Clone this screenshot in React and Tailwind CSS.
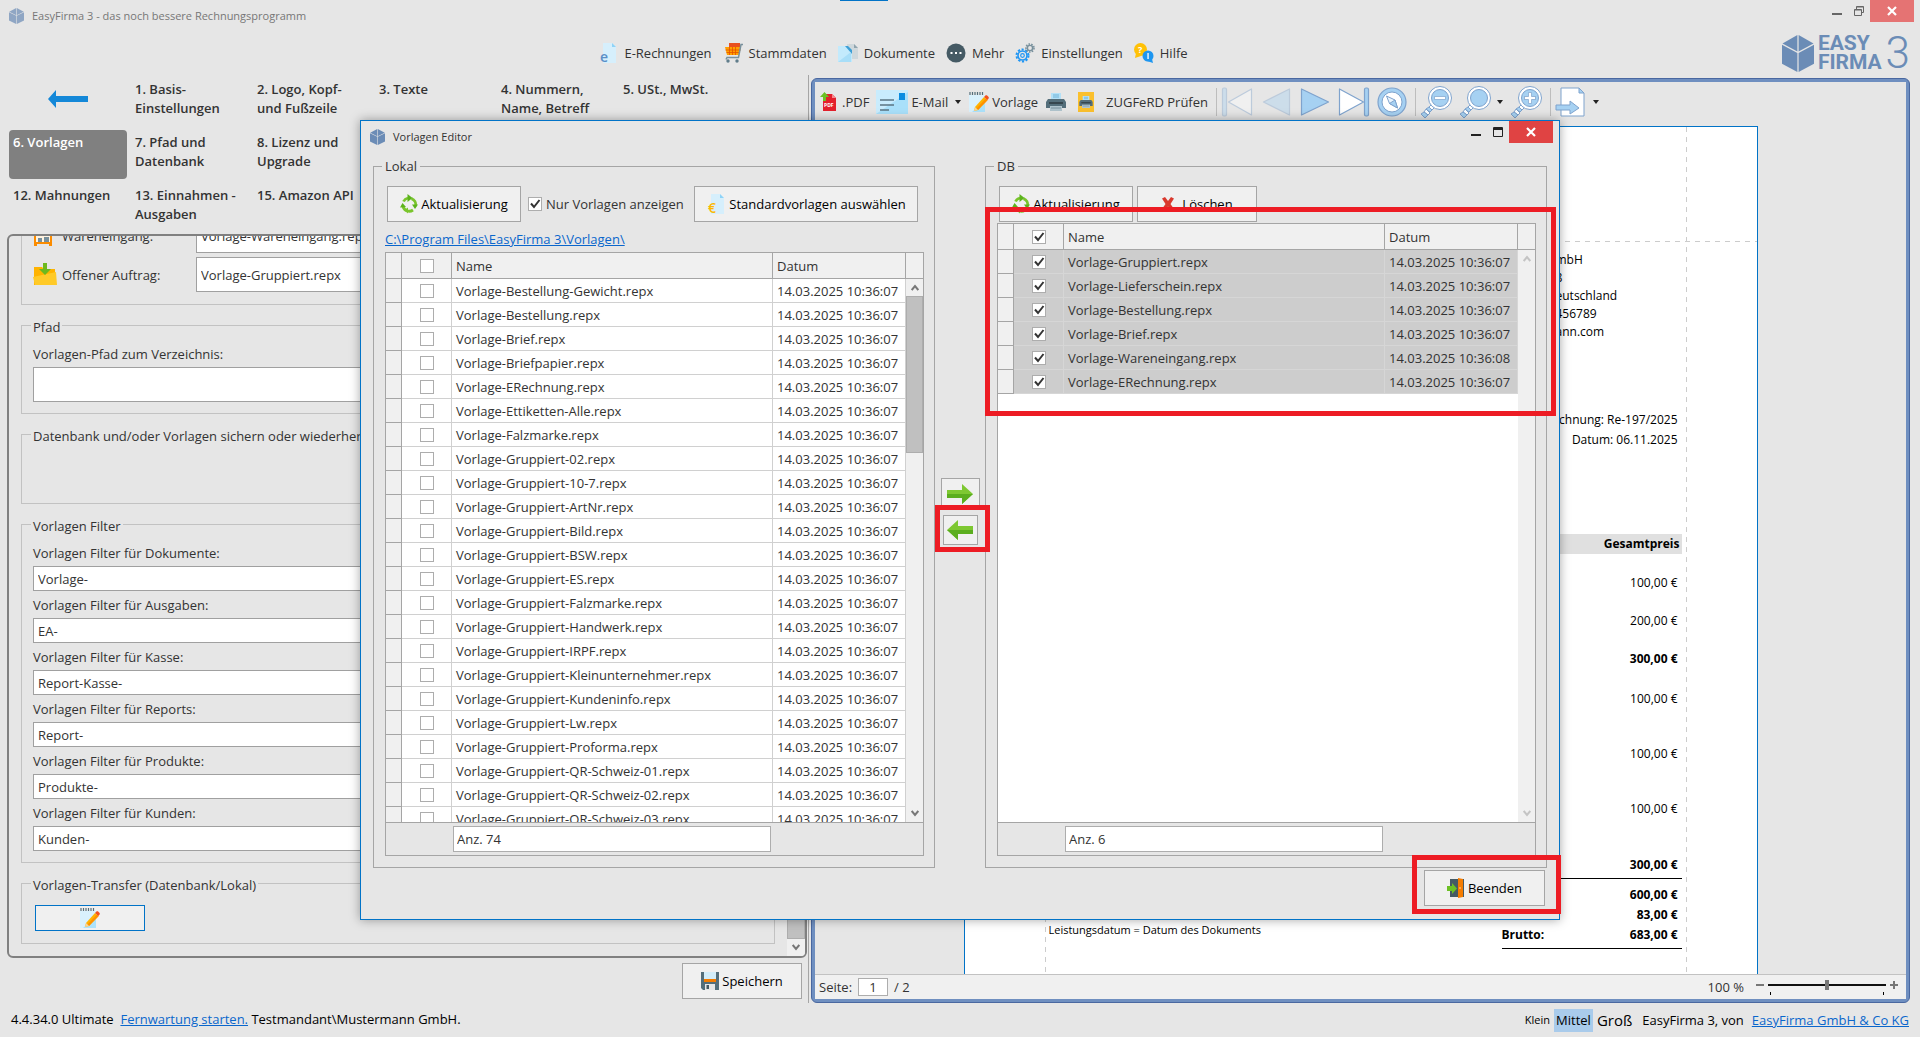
import { useId, useState } from 'react';

const TILES = [
  null,
  '1. Basis-\nEinstellungen',
  '2. Logo, Kopf-\nund Fußzeile',
  '3. Texte',
  '4. Nummern,\nName, Betreff',
  '5. USt., MwSt.',
  '6. Vorlagen',
  '7. Pfad und\nDatenbank',
  '8. Lizenz und\nUpgrade',
  '',
  '',
  '',
  '12. Mahnungen',
  '13. Einnahmen -\nAusgaben',
  '15. Amazon API',
];

const FILTERS = [
  ['Dokumente', 'Vorlage-'],
  ['Ausgaben', 'EA-'],
  ['Kasse', 'Report-Kasse-'],
  ['Reports', 'Report-'],
  ['Produkte', 'Produkte-'],
  ['Kunden', 'Kunden-'],
];

const LOCAL_FILES = [
  'Bestellung-Gewicht',
  'Bestellung',
  'Brief',
  'Briefpapier',
  'ERechnung',
  'Ettiketten-Alle',
  'Falzmarke',
  'Gruppiert-02',
  'Gruppiert-10-7',
  'Gruppiert-ArtNr',
  'Gruppiert-Bild',
  'Gruppiert-BSW',
  'Gruppiert-ES',
  'Gruppiert-Falzmarke',
  'Gruppiert-Handwerk',
  'Gruppiert-IRPF',
  'Gruppiert-Kleinunternehmer',
  'Gruppiert-Kundeninfo',
  'Gruppiert-Lw',
  'Gruppiert-Proforma',
  'Gruppiert-QR-Schweiz-01',
  'Gruppiert-QR-Schweiz-02',
  'Gruppiert-QR-Schweiz-03',
].map((n) => ({ name: `Vorlage-${n}.repx`, date: '14.03.2025 10:36:07' }));

const DB_FILES = [
  { name: 'Vorlage-Gruppiert.repx', date: '14.03.2025 10:36:07' },
  { name: 'Vorlage-Lieferschein.repx', date: '14.03.2025 10:36:07' },
  { name: 'Vorlage-Bestellung.repx', date: '14.03.2025 10:36:07' },
  { name: 'Vorlage-Brief.repx', date: '14.03.2025 10:36:07' },
  { name: 'Vorlage-Wareneingang.repx', date: '14.03.2025 10:36:08' },
  { name: 'Vorlage-ERechnung.repx', date: '14.03.2025 10:36:07' },
];

/* ---------- icons ---------- */

function CubeIcon({ className }) {
  return (
    <svg viewBox="0 0 32 38" className={className} preserveAspectRatio="none" aria-hidden="true">
      <path d="M0 10L15.400 18.500V38L0 29.500z" fill="#6b8cb6" />
      <path d="M32 10L16.600 18.500V38L32 29.500z" fill="#6b8cb6" />
      <path d="M15.400 0L.5 8.700L15.400 17z" fill="#6b8cb6" />
      <path d="M16.600 0L31.500 8.700L16.600 17z" fill="#6b8cb6" />
    </svg>
  );
}

function PageIcon({ glyph, color }) {
  return (
    <svg viewBox="0 0 20 22" className="h-[22px] w-5" aria-hidden="true">
      <path d="M5 1h9l4 4v16H5z" fill="#d6effc" />
      <path d="M14 1l4 4h-4z" fill="#8fd3f7" />
      <text x="2" y="20" fontSize="14" fontWeight="600" fill={color} fontFamily="Open Sans">{glyph}</text>
    </svg>
  );
}

function CartIcon() {
  return (
    <svg viewBox="0 0 20 20" className="size-5" aria-hidden="true">
      <path d="M6 0h11v5H6z" fill="#e8501f" />
      <path d="M2 4h16l-2 8H4z" fill="#ffa000" />
      <path d="M6.500 4v8M9.500 4v8M12.500 4v8M2.500 7h15M3.500 9.500h13" stroke="#e65100" strokeWidth=".8" />
      <path d="M20 1.500h-2l-2.500 13H4l-1 2" fill="none" stroke="#78909c" strokeWidth="1.500" />
      <circle cx="5" cy="18" r="1.700" fill="#607d8b" />
      <circle cx="14" cy="18" r="1.700" fill="#607d8b" />
    </svg>
  );
}

function DocsIcon() {
  return (
    <svg viewBox="0 0 20 20" className="size-5" aria-hidden="true">
      <path d="M9 1h7l4 4v11H9z" fill="#cfd8dc" />
      <path d="M16 1l4 4h-4z" fill="#90a4ae" />
      <path d="M0 3h9l5 5v11H0z" fill="#c3eafc" />
      <path d="M7 3l7 8V7L10 3z" fill="#3d9fd6" />
      <path d="M0 19L13 9v10z" fill="#a8def8" />
    </svg>
  );
}

function MoreIcon() {
  return (
    <svg viewBox="0 0 20 20" className="size-5" aria-hidden="true">
      <circle cx="10" cy="10" r="9.500" fill="#455a64" />
      <path d="M4.500 9h2v2h-2zM9 9h2v2H9zM13.500 9h2v2h-2z" fill="#fff" />
    </svg>
  );
}

function GearsIcon() {
  return (
    <svg viewBox="0 0 20 20" className="size-5" fill="none" aria-hidden="true">
      <circle cx="7.500" cy="12.500" r="6" stroke="#2196f3" strokeWidth="2" strokeDasharray="2.200 1.600" />
      <circle cx="7.500" cy="12.500" r="4.500" stroke="#2196f3" strokeWidth="1.600" />
      <circle cx="7.500" cy="12.500" r="1.800" stroke="#2196f3" strokeWidth="1.200" />
      <circle cx="15" cy="5" r="4" stroke="#78909c" strokeWidth="1.600" strokeDasharray="1.600 1.200" />
      <circle cx="15" cy="5" r="2.600" stroke="#78909c" strokeWidth="1.400" />
    </svg>
  );
}

function HelpIcon() {
  return (
    <svg viewBox="0 0 20 20" className="size-5" aria-hidden="true">
      <circle cx="6.500" cy="6.500" r="6.500" fill="#ffc107" />
      <path d="M2 10l-1 5 6-2z" fill="#ffc107" />
      <circle cx="14" cy="13" r="5.500" fill="#1e96f0" />
      <path d="M18 16l1 4-6-2z" fill="#1e96f0" />
      <text x="4" y="10" fontSize="9" fontWeight="700" fill="#fff" fontFamily="Open Sans">?</text>
      <path d="M13.400 10h1.300v6h-1.300z" fill="#fff" />
    </svg>
  );
}

function PdfIcon() {
  return (
    <svg viewBox="0 0 18 20" className="h-5 w-[18px]" aria-hidden="true">
      <path d="M3 2h9l4 4v13H3z" fill="#e4202c" />
      <path d="M12 2l4 4h-4z" fill="#f58a8f" />
      <path d="M4.500 0L0 5h3v4h3V5h3z" fill="#6cc024" />
      <text x="4" y="15" fontSize="5" fontWeight="700" fill="#fff" fontFamily="Open Sans">PDF</text>
    </svg>
  );
}

function MailIcon() {
  return (
    <svg viewBox="0 0 32 24" className="h-6 w-8" aria-hidden="true">
      <path d="M0 0h32v24H0z" fill="#c9ecfd" />
      <path d="M32 2v22H0z" fill="#a9e0fa" />
      <path d="M23 3h6v7h-6z" fill="#0a8ce0" />
      <path d="M4 10h14M4 15h14M4 20h9" stroke="#5b7482" strokeWidth="1.300" />
    </svg>
  );
}

function NotePencilIcon() {
  return (
    <svg viewBox="0 0 20 20" className="size-5" aria-hidden="true">
      <path d="M0 3h16v17H0z" fill="#d9f1fd" />
      <path d="M16 8v12H3z" fill="#ace2fb" />
      <path d="M1 0v3M3.500 0v3M6 0v3M8.500 0v3M11 0v3M13.500 0v3" stroke="#546e7a" strokeWidth="1.200" />
      <path d="M5 19l1-4L15 5l3.500 3.200L9 18z" fill="#ffb300" />
      <path d="M7.500 16.500L16.800 6.600l1.700 1.600L9 18z" fill="#ff9100" />
      <path d="M15 5l1.200-1.200c.6-.6 1.500-.6 2.200 0l1 1c.6.6.6 1.400 0 2l-1 1.300z" fill="#f4511e" />
      <path d="M6 15l3 3-4 1z" fill="#f5d5a0" />
    </svg>
  );
}

function PrinterIcon({ className }) {
  return (
    <svg viewBox="0 0 20 18" className={className} aria-hidden="true">
      <path d="M5 0h10v7H5z" fill="#b3e0f7" />
      <path d="M7 2h6M7 4h6" stroke="#5fa8cf" strokeWidth=".8" />
      <path d="M2 6h16l2 3v6H0V9z" fill="#546e7a" />
      <path d="M3 9h14v2H3z" fill="#37474f" />
      <path d="M4 13h12v5H4z" fill="#b0c4cd" />
      <path d="M5 15h10" stroke="#78909c" strokeWidth="1" />
    </svg>
  );
}

function RecycleIcon() {
  return (
    <svg viewBox="0 0 18 20" className="h-5 w-[18px]" fill="none" aria-hidden="true">
      <path d="M3.500 7.500A6.500 6.500 0 0 1 8 4" stroke="#7ac52c" strokeWidth="2.800" />
      <path d="M11.500 4.600A6.500 6.500 0 0 1 15.600 12" stroke="#7ac52c" strokeWidth="2.800" />
      <path d="M13 16A6.500 6.500 0 0 1 3 12.500" stroke="#7ac52c" strokeWidth="2.800" />
      <path d="M7.500 0l5 4-5 4zM12 10.500h6l-3 4.500zM0 13.500l2.500-4.500 3.500 4z" fill="#5cb31c" />
      <path d="M8 13.500v6l-3.500-3.500z" fill="#7ac52c" />
    </svg>
  );
}

function CrossIcon() {
  return (
    <svg viewBox="0 0 14 14" className="size-3.5" aria-hidden="true">
      <path d="M1 1.500L4 0l3 4 3-4 3 1.500L9.500 7l3.500 5-3 2-3-4.500L4 14l-3-2 3.500-5z" fill="#d9392e" />
    </svg>
  );
}

function ArrowIcon({ left }) {
  return (
    <svg viewBox="0 0 26 20" className={left ? 'h-5 w-[26px] rotate-180' : 'h-5 w-[26px]'} aria-hidden="true">
      <path d="M0 6h15V0l11 10-11 10v-6H0z" fill="#7ec832" />
      <path d={left ? 'M0 6h15V0l11 10H0z' : 'M0 10h26L15 20v-6H0z'} fill="#5bae1e" />
    </svg>
  );
}

function DoorIcon() {
  return (
    <svg viewBox="0 0 18 20" className="h-5 w-[18px]" aria-hidden="true">
      <path d="M3 1h14v18H3z" fill="#455a64" />
      <path d="M11 0l5 1v18l-5 1z" fill="#f57c00" />
      <circle cx="13" cy="10" r=".8" fill="#ffe0b2" />
      <path d="M0 8h5V5l5 5.500L5 16v-3H0z" fill="#6cc024" />
    </svg>
  );
}

function FloppyIcon() {
  return (
    <svg viewBox="0 0 18 18" className="size-[18px]" aria-hidden="true">
      <path d="M0 0h18v18H2l-2-2z" fill="#546e7a" />
      <path d="M3 0h12v7H3z" fill="#d3edf9" />
      <path d="M3 7h12v3H3z" fill="#f57c00" />
      <path d="M4 12h10v6H4z" fill="#e6e6e6" />
      <path d="M5.500 13h2.500v4H5.500z" fill="#455a64" />
    </svg>
  );
}

function ShelfIcon() {
  return (
    <svg viewBox="0 0 20 20" className="size-5" aria-hidden="true">
      <path d="M1 0h18v20h-3v-2H4v2H1z" fill="#fb8c00" />
      <path d="M3 2h14v5H3zM3 10h14v6H3z" fill="#fff3e0" />
      <path d="M5 3h5v4H5z" fill="#e64a19" />
      <path d="M5 12h4v4H5zM11 11h5v5h-5z" fill="#78909c" />
    </svg>
  );
}

function FolderIcon() {
  return (
    <svg viewBox="0 0 24 24" className="size-6" aria-hidden="true">
      <path d="M1 4h8l2 2h11v16H1z" fill="#ffb300" />
      <path d="M0 14L23 9l1 13H2z" fill="#ffca28" />
      <path d="M10 0h4v6h4l-6 6-6-6h4z" fill="#6cb91e" />
    </svg>
  );
}

function NavIcon({ kind, dim }) {
  const shapes = {
    first: (
      <>
        <rect x="1" y="1" width="4" height="28" rx="1.500" fill="#a6d1f2" />
        <path d="M30 2v26L7 15z" fill="#fff" />
      </>
    ),
    prev: <path d="M29 2v26L3 15z" fill="#a6d1f2" />,
    next: <path d="M2 2v26l27-13z" fill="#a6d1f2" />,
    last: (
      <>
        <path d="M1 2v26l24-13z" fill="#fff" />
        <rect x="26" y="1" width="4" height="28" rx="1.500" fill="#a6d1f2" />
      </>
    ),
  };
  return (
    <svg
      viewBox="0 0 31 30"
      className={dim ? 'h-[30px] w-8 opacity-40' : 'h-[30px] w-8'}
      stroke="#7fa3cd"
      strokeWidth="1.200"
      strokeLinejoin="round"
      aria-hidden="true"
    >
      {shapes[kind]}
    </svg>
  );
}

function CompassIcon() {
  return (
    <svg viewBox="0 0 30 30" className="size-[30px]" stroke="#7fa3cd" aria-hidden="true">
      <circle cx="15" cy="15" r="14" fill="#a6d1f2" strokeWidth="1.200" />
      <circle cx="15" cy="15" r="10" fill="#fff" />
      <path d="M9.500 9l8.500 4 2.500 8-8-4.500z" fill="#e8f3fc" />
      <path d="M12.500 16.500L18 13l2.500 8z" fill="#a6d1f2" />
    </svg>
  );
}

function ZoomIcon({ sign }) {
  return (
    <svg viewBox="0 0 32 32" className="size-8" stroke="#7fa3cd" aria-hidden="true">
      <path d="M13 17l3 3-4 4-3-3z" fill="#fff" />
      <path d="M9 21l3 3-2 2-4-3z" fill="#a6d1f2" />
      <path d="M6 23l4 4-2 2-4-3z" fill="#fff" />
      <path d="M4 26l4 3-3 3-4-4z" fill="#a6d1f2" />
      <circle cx="20" cy="12" r="11.500" fill="#fff" />
      <circle cx="20" cy="12" r="8.500" fill="#a6d1f2" />
      {sign && <path d="M14.500 10.500h11v3h-11z" fill="#fff" strokeWidth=".7" />}
      {sign === '+' && (
        <path d="M18.500 6.500h3v4h4v3h-4v4h-3v-4h-4v-3h4z" fill="#fff" strokeWidth=".7" />
      )}
    </svg>
  );
}

function ExportIcon() {
  return (
    <svg viewBox="0 0 30 30" className="size-[30px]" stroke="#7fa3cd" strokeLinejoin="round" aria-hidden="true">
      <path d="M6 1h18l5 5v23H6z" fill="#fff" />
      <path d="M24 1v5h5z" fill="#a6d1f2" />
      <path d="M1 18h14v-4l9 7-9 6v-4H1z" fill="#a6d1f2" />
    </svg>
  );
}

function Caret() {
  return (
    <svg viewBox="0 0 6 4" className="h-1 w-1.5" aria-hidden="true">
      <path d="M0 0h6L3 4z" fill="#222" />
    </svg>
  );
}

function Chevron({ down, muted }) {
  return (
    <svg viewBox="0 0 8 7" className="h-[7px] w-2" fill="none" stroke={muted ? '#c4c4c4' : '#777'} strokeWidth="2" aria-hidden="true">
      <path d={down ? 'M.7 1L4 5L7.300 1' : 'M.7 6L4 2L7.300 6'} />
    </svg>
  );
}

/* ---------- small controls ---------- */

function Check({ defaultChecked = false, id, label }) {
  return (
    <span className="relative inline-block size-3.5 align-middle">
      <input
        id={id}
        type="checkbox"
        aria-label={label}
        defaultChecked={defaultChecked}
        className="peer block size-3.5 appearance-none border border-[#adadad] bg-white"
      />
      <svg
        viewBox="0 0 14 14"
        className="pointer-events-none absolute inset-0 hidden size-3.5 peer-checked:block"
        fill="none"
        stroke="#333"
        strokeWidth="2"
        aria-hidden="true"
      >
        <path d="M3 6.500L6 10L11.500 3" />
      </svg>
    </span>
  );
}

function WindowButtons({ restore, faded }) {
  return (
    <div className={faded ? 'flex items-start text-[#666]' : 'flex items-start text-[#222]'}>
      <button type="button" aria-label="Minimieren" className="flex h-[22px] w-[22px] items-center justify-center">
        <svg viewBox="0 0 10 10" className="size-2.5"><path d="M0 7h10v2H0z" fill="currentColor" /></svg>
      </button>
      <button type="button" aria-label="Maximieren" className="flex h-[22px] w-[22px] items-center justify-center">
        <svg viewBox="0 0 10 10" className="size-2.5" fill="none" stroke="currentColor">
          {restore ? (
            <path d="M2.500 3V.5h7v6H7.500M.5 3.500h7v6h-7zM.5 4h7M2.500 1h7" />
          ) : (
            <path d="M.5 .5h9v9h-9zM0 1.500h10M0 2.500h10" />
          )}
        </svg>
      </button>
      <button
        type="button"
        aria-label="Schließen"
        className={
          faded
            ? 'flex h-[22px] w-11 items-center justify-center bg-[#e57373]'
            : 'flex h-[22px] w-11 items-center justify-center bg-[#e04343]'
        }
      >
        <svg viewBox="0 0 10 10" className="size-2.5" stroke="#fff" strokeWidth="2.200">
          <path d="M1 1l8 8M9 1l-8 8" />
        </svg>
      </button>
    </div>
  );
}

function Button({ icon, children, className }) {
  return (
    <button
      type="button"
      className={`flex h-9 items-center justify-center gap-[3px] border border-[#a5a5a5] bg-[#f0f0f0] whitespace-nowrap text-black ${className}`}
    >
      {icon}
      {children}
    </button>
  );
}

function SettingsGroup({ title, children, className = '' }) {
  return (
    <fieldset className={`shrink-0 border border-[#c2c2c2] px-[11px] ${className}`}>
      {title && <legend className="-ml-0.5 px-0.5 pt-1 leading-5 whitespace-nowrap">{title}</legend>}
      {children}
    </fieldset>
  );
}

function LabeledInput({ label, value, tall }) {
  const id = useId();
  return (
    <div>
      <label htmlFor={id} className="block h-[27px] leading-7">{label}</label>
      <input
        id={id}
        defaultValue={value}
        className={
          tall
            ? 'block h-[35px] w-full border border-[#a0a0a0] bg-white px-1'
            : 'block h-[25px] w-full border border-[#a0a0a0] bg-white px-1'
        }
      />
    </div>
  );
}

function TemplateRow({ icon, label, value }) {
  const id = useId();
  return (
    <div className="mb-1 flex h-[35px] items-center">
      <span className="flex w-[29px] shrink-0 items-center">{icon}</span>
      <label htmlFor={id} className="w-[134px] shrink-0">{label}</label>
      <input id={id} defaultValue={value} className="h-full min-w-0 flex-1 border border-[#a0a0a0] bg-white px-1" />
    </div>
  );
}

/* ---------- settings on the left ---------- */

function TileMenu() {
  return (
    <nav className="grid grid-cols-[repeat(6,118px)] grid-rows-[repeat(3,49px)] gap-1 pt-0.5 pl-0.5 leading-[19px] font-semibold">
      {TILES.map((tile, i) => {
        if (tile === null) {
          return (
            <button key={i} type="button" aria-label="Zurück" className="flex items-center justify-center pb-1.5">
              <svg viewBox="0 0 40 18" className="h-[18px] w-10" aria-hidden="true">
                <path d="M8 0v6h32v6H8v6L0 9z" fill="#1488d8" />
              </svg>
            </button>
          );
        }
        if (!tile) return <span key={i} />;
        return (
          <button
            key={i}
            type="button"
            className={
              tile === '6. Vorlagen'
                ? 'flex rounded bg-[#808080] px-1 pt-[3px] text-left whitespace-pre text-white'
                : 'flex px-1 pt-[3px] text-left whitespace-pre'
            }
          >
            {tile}
          </button>
        );
      })}
    </nav>
  );
}

function SettingsPanel() {
  return (
    <div className="mt-0.5 flex min-h-0 flex-1 overflow-hidden rounded-md border-2 border-[#808080]">
      {/* scrolled to the end, so the content hangs from the bottom edge */}
      <div className="flex min-w-0 flex-1 flex-col justify-end gap-2 overflow-hidden px-3 pb-3">
        <SettingsGroup className="pb-2">
          <TemplateRow icon={<ShelfIcon />} label="Wareneingang:" value="Vorlage-Wareneingang.repx" />
          <TemplateRow icon={<FolderIcon />} label="Offener Auftrag:" value="Vorlage-Gruppiert.repx" />
        </SettingsGroup>
        <SettingsGroup title="Pfad" className="pb-[11px]">
          <div className="pt-[3px]">
            <LabeledInput label="Vorlagen-Pfad zum Verzeichnis:" value="" tall />
          </div>
        </SettingsGroup>
        <SettingsGroup title="Datenbank und/oder Vorlagen sichern oder wiederherstellen">
          <div className="h-[57px]" />
        </SettingsGroup>
        <SettingsGroup title="Vorlagen Filter" className="pb-[11px]">
          <div className="pt-[3px]">
            {FILTERS.map(([name, value]) => (
              <LabeledInput key={name} label={`Vorlagen Filter für ${name}:`} value={value} />
            ))}
          </div>
        </SettingsGroup>
        <SettingsGroup title="Vorlagen-Transfer (Datenbank/Lokal)" className="pb-3">
          <button
            type="button"
            aria-label="Vorlagen-Transfer öffnen"
            className="mt-2.5 ml-0.5 flex h-[26px] w-[110px] items-center justify-center border border-[#0173c7] bg-[#f0f0f0]"
          >
            <NotePencilIcon />
          </button>
        </SettingsGroup>
      </div>
      <div className="flex w-[18px] flex-col bg-[#f0f0f0]">
        <div className="mt-10 flex-1 border border-[#adadad] bg-[#c0c0c0]" />
        <div className="flex h-[17px] items-center justify-center"><Chevron down /></div>
      </div>
    </div>
  );
}

/* ---------- invoice preview on the right ---------- */

function Divider() {
  return <span className="h-7 w-px bg-[#bdbdbd]" />;
}

function ToolButton({ label, children, className = '' }) {
  return (
    <button type="button" aria-label={label} className={`flex shrink-0 items-center whitespace-nowrap ${className}`}>
      {children}
    </button>
  );
}

function PreviewToolbar() {
  return (
    <div className="flex h-[41px] shrink-0 items-center pb-0.5 pl-[5px]">
      <ToolButton className="gap-1"><PdfIcon />.PDF</ToolButton>
      <ToolButton className="ml-[7px] gap-[3px]"><MailIcon />E-Mail<span className="ml-1"><Caret /></span></ToolButton>
      <ToolButton className="ml-2 gap-[3px]"><NotePencilIcon />Vorlage</ToolButton>
      <ToolButton label="Drucken" className="ml-2"><PrinterIcon className="h-[18px] w-5" /></ToolButton>
      <ToolButton className="ml-3 gap-3">
        <span className="flex h-5 w-4 items-center justify-center bg-[#fbc02d]"><PrinterIcon className="h-3 w-3.5" /></span>
        ZUGFeRD Prüfen
      </ToolButton>
      <div className="ml-2 flex items-center gap-2">
        <Divider />
        <div className="-ml-1 flex gap-[7px]">
          <ToolButton label="Erste Seite"><NavIcon kind="first" dim /></ToolButton>
          <ToolButton label="Vorige Seite"><NavIcon kind="prev" dim /></ToolButton>
          <ToolButton label="Nächste Seite"><NavIcon kind="next" /></ToolButton>
          <ToolButton label="Letzte Seite"><NavIcon kind="last" /></ToolButton>
          <ToolButton label="Navigation"><CompassIcon /></ToolButton>
        </div>
        <Divider />
        <div className="-ml-1 flex gap-[7px]">
          <ToolButton label="Verkleinern"><ZoomIcon sign="-" /></ToolButton>
          <ToolButton label="Zoom" className="gap-1.5"><ZoomIcon /><Caret /></ToolButton>
          <ToolButton label="Vergrößern"><ZoomIcon sign="+" /></ToolButton>
        </div>
        <Divider />
        <ToolButton label="Exportieren" className="-ml-1 gap-2"><ExportIcon /><Caret /></ToolButton>
      </div>
    </div>
  );
}

function InvoicePage() {
  return (
    <div className="relative mt-[3px] flex w-[794px] flex-col overflow-hidden border border-b-0 border-[#0173c7] bg-white pr-[75px] pl-[84px] text-xs text-black">
      <span className="absolute inset-y-0 left-20 w-px bg-[repeating-linear-gradient(to_bottom,#ccc_0_5px,transparent_5px_10px)]" />
      <span className="absolute inset-y-0 right-[70px] w-px bg-[repeating-linear-gradient(to_bottom,#ccc_0_5px,transparent_5px_10px)]" />
      <span className="absolute inset-x-0 top-[114px] h-px bg-[repeating-linear-gradient(to_right,#ccc_0_5px,transparent_5px_10px)]" />

      <address className="mt-[124px] w-[126px] self-end leading-[18px] not-italic">
        mbH
        <br />8
        <br />eutschland
        <br />456789
        <br />ann.com
      </address>
      <div className="mt-[69px] pr-1 text-right leading-5">
        <p>Rechnung: Re-197/2025</p>
        <p>Datum: 06.11.2025</p>
      </div>

      <table className="mt-[84px] w-full border-b border-black text-right leading-[18px]">
        <thead>
          <tr className="h-5 bg-[#e0e0e0]">
            <th scope="col" className="p-0 pr-0.5 font-bold">Gesamtpreis</th>
          </tr>
        </thead>
        <tbody className="align-bottom">
          <tr className="h-[38px]"><td className="p-0 pr-1">100,00 €</td></tr>
          <tr className="h-[38px]"><td className="p-0 pr-1">200,00 €</td></tr>
          <tr className="h-[38px] font-bold"><td className="p-0 pr-1">300,00 €</td></tr>
          <tr className="h-10"><td className="p-0 pr-1">100,00 €</td></tr>
          <tr className="h-[55px]"><td className="p-0 pr-1">100,00 €</td></tr>
          <tr className="h-[55px]"><td className="p-0 pr-1">100,00 €</td></tr>
          <tr className="h-[60px] font-bold"><td className="p-0 pr-1 pb-1">300,00 €</td></tr>
        </tbody>
      </table>

      <div className="mt-1.5 flex items-end justify-between">
        <p className="pb-[11px] text-[11px]">Leistungsdatum = Datum des Dokuments</p>
        <dl className="grid w-[180px] grid-cols-2 border-b border-black pr-1 pb-[3px] leading-5 font-bold">
          <dd className="col-start-2 text-right">600,00 €</dd>
          <dd className="col-start-2 text-right">83,00 €</dd>
          <dt>Brutto:</dt>
          <dd className="text-right">683,00 €</dd>
        </dl>
      </div>
    </div>
  );
}

function PreviewStatus() {
  return (
    <div className="flex h-[25px] shrink-0 items-center border-t border-[#c2c2c2] bg-[#f0f0f0] pr-2 pl-1">
      <label htmlFor="page">Seite:</label>
      <input id="page" defaultValue="1" className="mx-1.5 h-[18px] w-[30px] border border-[#adadad] bg-white text-center" />
      <span>/ 2</span>
      <label htmlFor="zoom" className="ml-auto">100 %</label>
      <button type="button" aria-label="Kleiner" className="ml-3 self-start pt-[9px]">
        <span className="block h-0.5 w-2 bg-[#777]" />
      </button>
      <div className="mx-1 w-[118px] self-start pt-[5px]">
        <input
          id="zoom"
          type="range"
          min="0"
          max="100"
          defaultValue="50"
          className="block h-2.5 w-full appearance-none bg-transparent bg-[linear-gradient(#111,#111)] bg-[length:100%_2px] bg-center bg-no-repeat [&::-webkit-slider-thumb]:h-2.5 [&::-webkit-slider-thumb]:w-1 [&::-webkit-slider-thumb]:appearance-none [&::-webkit-slider-thumb]:bg-[#777]"
        />
        <div className="mt-0.5 flex justify-between px-0.5">
          <span className="h-[3px] w-px bg-black" />
          <span className="h-[3px] w-px bg-black" />
        </div>
      </div>
      <button type="button" aria-label="Größer" className="self-start pt-1.5">
        <svg viewBox="0 0 8 8" className="size-2"><path d="M3 0h2v8H3zM0 3h8v2H0z" fill="#777" /></svg>
      </button>
    </div>
  );
}

/* ---------- template editor dialog ---------- */

function EditorGroup({ title, children }) {
  return (
    <fieldset className="flex min-w-0 flex-1 flex-col border border-[#a5a5a5] pr-2.5 pb-[11px] pl-[11px]">
      <legend className="-ml-[3px] px-[3px] leading-5">{title}</legend>
      {children}
    </fieldset>
  );
}

function FileGrid({ files, count, checked = false }) {
  const cell = checked ? 'border-r border-b border-[#d6d6d6] p-0 pl-1' : 'border-r border-b border-[#d0d0d0] p-0 pl-1';
  const head = 'border-r border-b border-[#a5a5a5] p-0 pl-1 text-left font-normal';
  return (
    <div className="flex min-h-0 flex-1 flex-col border border-[#a5a5a5]">
      <div className="flex min-h-0 flex-1 overflow-hidden bg-white">
        <div className="min-w-0 flex-1">
          <table className="w-full table-fixed border-separate border-spacing-0">
            <colgroup>
              <col className="w-4" />
              <col className="w-[50px]" />
              <col />
              <col className="w-[133px]" />
            </colgroup>
            <thead>
              <tr className="h-[26px] bg-[#f0f0f0]">
                <th className={head} />
                <th className="border-r border-b border-[#a5a5a5] p-0 text-center leading-none">
                  <Check defaultChecked={checked} label="Alle auswählen" />
                </th>
                <th scope="col" className={head}>Name</th>
                <th scope="col" className={head}>Datum</th>
              </tr>
            </thead>
            <tbody>
              {files.map((file) => (
                <tr key={file.name} className={checked ? 'h-6 bg-[#cdcdcd]' : 'h-6'}>
                  <td className="border-r border-b border-[#a5a5a5] bg-[#f0f0f0] p-0" />
                  <td className={checked ? 'border-r border-b border-[#d6d6d6] p-0 text-center leading-none' : 'border-r border-b border-[#d0d0d0] p-0 text-center leading-none'}>
                    <Check defaultChecked={checked} label={file.name} />
                  </td>
                  <td className={cell}>{file.name}</td>
                  <td className={cell}>{file.date}</td>
                </tr>
              ))}
            </tbody>
          </table>
        </div>
        <div className="flex w-[17px] flex-col bg-[#f0f0f0]">
          <div className="h-[26px] border-b border-[#a5a5a5]" />
          <div className="flex h-[17px] items-center justify-center"><Chevron muted={checked} /></div>
          {!checked && <div className="h-[157px] border border-[#adadad] bg-[#c0c0c0]" />}
          <div className="mt-auto flex h-[17px] items-center justify-center"><Chevron down muted={checked} /></div>
        </div>
      </div>
      <div className="h-[33px] border-t border-[#a5a5a5] bg-[#e6e6e6] pt-[3px] pr-[152px] pl-[67px]">
        <input aria-label="Anzahl" readOnly value={count} className="block h-[26px] w-full border border-[#adadad] bg-white px-[3px]" />
      </div>
    </div>
  );
}

// red frame drawn around the steps the user has to click
function Marker({ className }) {
  return <span className={`pointer-events-none absolute border-[5px] border-[#ed1c24] ${className}`} />;
}

function TemplateEditor() {
  return (
    <section
      role="dialog"
      aria-label="Vorlagen Editor"
      className="absolute top-[120px] right-[360px] left-[360px] flex h-[800px] flex-col border border-[#0173c7] bg-[#e6e6e6] shadow-[0_0_10px_rgba(0,0,0,0.35)]"
    >
      <header className="flex h-8 shrink-0 justify-between pr-1.5 pl-[9px]">
        <div className="flex items-center gap-2 text-[11px]">
          <CubeIcon className="h-4 w-[15px]" />
          Vorlagen Editor
        </div>
        <WindowButtons />
      </header>

      <div className="mt-[3px] flex h-[712px] px-3">
        <EditorGroup title="Lokal">
          <div className="flex items-center px-0.5 pt-2.5">
            <Button icon={<RecycleIcon />} className="w-[134px]">Aktualisierung</Button>
            <label className="ml-[7px] flex items-center gap-1 whitespace-nowrap">
              <Check defaultChecked />
              Nur Vorlagen anzeigen
            </label>
            <Button icon={<PageIcon glyph="€" color="#fbb800" />} className="mr-1 ml-auto w-56">Standardvorlagen auswählen</Button>
          </div>
          <div className="flex h-[30px] items-center pt-1">
            <a href="#vorlagen" className="text-[#0a66cc] underline">C:\Program Files\EasyFirma 3\Vorlagen\</a>
          </div>
          <FileGrid files={LOCAL_FILES} count="Anz. 74" />
        </EditorGroup>

        <div className="flex w-[50px] flex-col items-center pt-[322px]">
          <button type="button" aria-label="In die Datenbank kopieren" className="flex h-8 w-[39px] items-center justify-center border border-[#a5a5a5] bg-[#f0f0f0]">
            <ArrowIcon />
          </button>
          <div className="relative mt-[5px]">
            <button type="button" aria-label="Nach Lokal kopieren" className="flex h-[30px] w-[35px] items-center justify-center border border-[#a5a5a5] bg-[#f0f0f0]">
              <ArrowIcon left />
            </button>
            <Marker className="-top-2.5 -right-3 -bottom-[7px] -left-2" />
          </div>
        </div>

        <EditorGroup title="DB">
          <div className="flex gap-1 px-0.5 pt-2.5 pb-px">
            <Button icon={<RecycleIcon />} className="w-[134px]">Aktualisierung</Button>
            <Button icon={<span className="mr-1"><CrossIcon /></span>} className="w-[120px]">Löschen</Button>
          </div>
          <div className="relative flex min-h-0 flex-1 flex-col">
            <FileGrid files={DB_FILES} count="Anz. 6" checked />
            <Marker className="-top-4 -right-5 -left-3 h-[209px]" />
          </div>
        </EditorGroup>
      </div>

      <footer className="flex justify-end pt-0.5 pr-3.5">
        <div className="relative">
          <Button icon={<DoorIcon />} className="w-[121px]">Beenden</Button>
          <Marker className="-top-[15px] -right-4 -bottom-2 -left-3" />
        </div>
      </footer>
    </section>
  );
}

/* ---------- main window ---------- */

function App() {
  const [size, setSize] = useState('Mittel');
  const menu = [
    [<PageIcon glyph="e" color="#5b8fc7" />, 'E-Rechnungen'],
    [<CartIcon />, 'Stammdaten'],
    [<DocsIcon />, 'Dokumente'],
    [<MoreIcon />, 'Mehr'],
    [<GearsIcon />, 'Einstellungen'],
    [<HelpIcon />, 'Hilfe'],
  ];

  return (
    <div className="relative flex h-screen flex-col overflow-hidden bg-[#e6e6e6] font-['Open_Sans','Noto_Sans',sans-serif] text-[13px] leading-5 text-[#333]">
      <span className="absolute top-0 left-[840px] h-px w-12 bg-[#0173c7]" />
      <header className="flex h-8 shrink-0 justify-between pr-1.5 pl-[9px]">
        <div className="flex items-center gap-2 text-[11px] text-[#777]">
          <CubeIcon className="h-4 w-[15px] opacity-70" />
          EasyFirma 3 - das noch bessere Rechnungsprogramm
        </div>
        <WindowButtons restore faded />
      </header>

      <div className="flex h-[43px] shrink-0 items-center pr-2.5 pb-px">
        <nav className="flex flex-1 items-center justify-center gap-[11px] pl-1">
          {menu.map(([icon, label]) => (
            <button key={label} type="button" className="flex items-center gap-1.5">
              {icon}
              {label}
            </button>
          ))}
        </nav>
        <div className="flex h-10 w-32 items-center justify-between text-[#6b8cb6]">
          <CubeIcon className="h-[37px] w-8" />
          <div className="font-['Liberation_Sans_Narrow','Roboto'] text-[21px] leading-[19px] font-bold">
            EASY
            <br />
            FIRMA
          </div>
          <span className="font-['Roboto'] text-[44px] leading-10 font-light">3</span>
        </div>
      </div>

      <main className="grid min-h-0 flex-1 grid-cols-[809px_1fr]">
        <div className="flex min-h-0 flex-col border-r border-[#a5a5a5] pr-px pl-[7px]">
          <TileMenu />
          <SettingsPanel />
          <div className="flex justify-end pt-[5px] pr-[5px] pb-1">
            <Button icon={<FloppyIcon />} className="w-[120px]">Speichern</Button>
          </div>
        </div>
        <div className="mt-[3px] mr-2.5 ml-0.5 flex min-h-0 rounded-md border border-[#4a68a0] bg-[#6f8fc0] p-[3px]">
          <div className="flex min-w-0 flex-1 flex-col bg-[#e6e6e6]">
            <PreviewToolbar />
            <div className="flex min-h-0 flex-1 justify-center overflow-hidden">
              <InvoicePage />
            </div>
            <PreviewStatus />
          </div>
        </div>
      </main>

      <footer className="flex h-[34px] shrink-0 items-center justify-between px-[11px] text-black">
        <p className="pb-0.5">
          4.4.34.0 Ultimate&nbsp;{' '}
          <a href="#fernwartung" className="text-[#0a66cc] underline">Fernwartung starten.</a> Testmandant\Mustermann GmbH.
        </p>
        <div className="flex items-center">
          <button type="button" onClick={() => setSize('Klein')} className="px-1 text-[11px]">Klein</button>
          <button
            type="button"
            onClick={() => setSize('Mittel')}
            className={size === 'Mittel' ? 'h-[23px] bg-[#a9cbeb] px-0.5' : 'h-[23px] px-0.5'}
          >
            Mittel
          </button>
          <button type="button" onClick={() => setSize('Groß')} className="px-1 text-[15px]">Groß</button>
          <span className="mr-2 ml-1.5">EasyFirma 3, von</span>
          <a href="#easyfirma" className="text-[#0a66cc] underline">EasyFirma GmbH &amp; Co KG</a>
        </div>
      </footer>

      <TemplateEditor />
    </div>
  );
}

export default App;
